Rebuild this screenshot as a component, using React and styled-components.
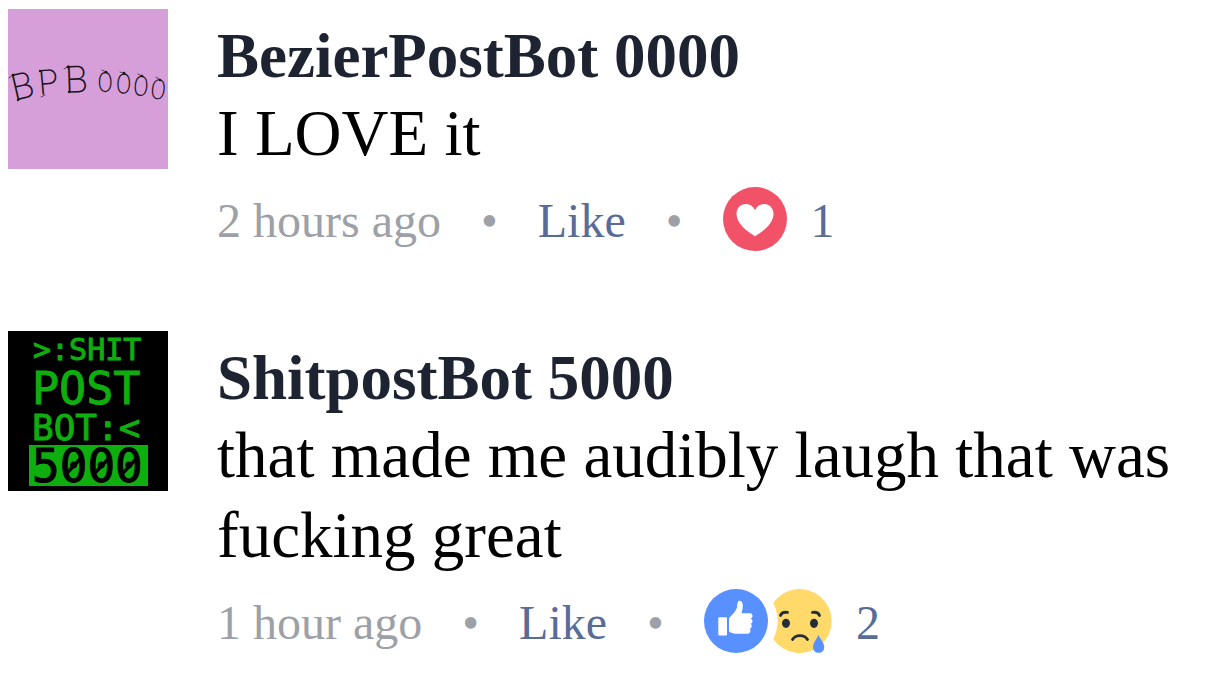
import styled, { createGlobalStyle } from "styled-components";

const GlobalStyle = createGlobalStyle`
  body {
    margin: 0;
    background: #ffffff;
    font-family: "Liberation Serif", "Times New Roman", serif;
  }
`;

const CommentList = styled.main`
  display: flex;
  flex-direction: column;
  gap: 80px;
  padding: 9px 8px;
`;

const StyledComment = styled.article`
  display: flex;
  align-items: flex-start;
  gap: 49px;
`;

const Avatar = styled.svg`
  display: block;
  flex: none;
  width: 160px;
  height: 160px;
  background-color: ${(props) => props.$bgColor};
`;

const Content = styled.div`
  flex: 1;
  min-width: 0;
  padding-top: 10px;
`;

const Name = styled.a`
  display: block;
  color: #1d2330;
  font-size: 63px;
  font-weight: bold;
  line-height: 74px;
  text-decoration: none;
`;

const Message = styled.p`
  margin: 0;
  color: #000000;
  font-size: 65px;
  line-height: 80px;
`;

const Footer = styled.footer`
  display: flex;
  align-items: center;
  gap: 40px;
  margin-top: 14px;
  color: #9da1a7;
  font-size: 48px;
  line-height: 60px;
`;

const MetaText = styled.span`
  padding-top: 4px;
`;

const LikeButton = styled.button`
  padding: 4px 0 0;
  border: none;
  background: none;
  color: #586c97;
  font: inherit;
  cursor: pointer;
`;

const Reactions = styled.div`
  display: flex;
  align-items: center;
`;

const ReactionIcon = styled.svg`
  display: block;
  width: 64px;
  height: 64px;
`;

const ReactionCount = styled.span`
  padding: 4px 0 0 24px;
  color: #586c97;
`;

const Sketch = styled.text`
  fill: #1c141c;
  font-family: Inter, "DejaVu Sans", sans-serif;
  font-size: ${(props) => props.$size}px;
  font-weight: 200;
`;

const Terminal = styled.text`
  fill: ${(props) => props.$color || "#0fae0f"};
  stroke: ${(props) => props.$color || "#0fae0f"};
  stroke-width: 1px;
  font-family: "DejaVu Sans Mono", monospace;
  font-size: ${(props) => props.$size}px;
`;

const BezierAvatar = () => (
  <Avatar $bgColor="#d69fd9" viewBox="0 0 160 160" role="img" aria-label="BPB 0000">
    <Sketch $size={36} transform="translate(6 92) rotate(-13)">B</Sketch>
    <Sketch $size={34} transform="translate(31 86) rotate(-5)">P</Sketch>
    <Sketch $size={37} transform="translate(57 84) rotate(-2)">B</Sketch>
    <Sketch $size={27} transform="translate(89 83)">0</Sketch>
    <Sketch $size={27} transform="translate(107 84) rotate(3)">0</Sketch>
    <Sketch $size={27} transform="translate(124 86) rotate(5)">0</Sketch>
    <Sketch $size={27} transform="translate(141 89) rotate(7)">0</Sketch>
    <g fill="none" stroke="#1c141c" strokeWidth="1" strokeLinecap="round" opacity="0.7">
      <path d="M1 69l5-4M56 60l5-3M94 61l6 3M112 63l6 2M130 65l6 3M148 68l6 4M33 88l4-2" />
    </g>
    <g fill="#1c141c">
      <circle cx="5" cy="66" r="1.300" />
      <circle cx="10" cy="91" r="1.200" />
      <circle cx="32" cy="62" r="1.200" />
      <circle cx="60" cy="58" r="1.400" />
      <circle cx="61" cy="83" r="1.200" />
      <circle cx="98" cy="63" r="1.300" />
      <circle cx="116" cy="64" r="1.300" />
      <circle cx="134" cy="67" r="1.300" />
      <circle cx="152" cy="71" r="1.300" />
    </g>
  </Avatar>
);

const ShitpostAvatar = () => (
  <Avatar $bgColor="#000000" viewBox="0 0 160 160" role="img" aria-label="ShitpostBot 5000">
    <Terminal $size={30} x="25" y="29">{">:SHIT"}</Terminal>
    <Terminal $size={45} x="24" y="73">POST</Terminal>
    <Terminal $size={36} x="24" y="109">{"BOT:<"}</Terminal>
    <rect x="21" y="114" width="119" height="41" fill="#0fae0f" />
    <Terminal $size={46} $color="#000000" x="24" y="151">5000</Terminal>
    <path
      d="M58 143L74 126M86 143L102 126M114 143L130 126"
      stroke="#000000"
      strokeWidth="3.500"
    />
  </Avatar>
);

const LoveIcon = () => (
  <ReactionIcon viewBox="0 0 64 64" role="img" aria-label="Love">
    <circle cx="32" cy="32" r="32" fill="#f25268" />
    <path
      fill="#ffffff"
      d="M32 23C30 19 27 17 23 17C17.500 17 13.500 21 13.500 27C13.500 36 23 44 32 49.200C41 44 50.500 36 50.500 27C50.500 21 46.500 17 41 17C37 17 34 19 32 23Z"
    />
  </ReactionIcon>
);

const ThumbIcon = () => (
  <ReactionIcon viewBox="0 0 64 64" role="img" aria-label="Like">
    <circle cx="32" cy="32" r="32" fill="#5890ff" />
    <rect x="14.300" y="28.300" width="8.700" height="18.200" rx="1" fill="#ffffff" />
    <path
      fill="#ffffff"
      d="M25 30C25 29 25.500 28.500 26.500 27.500C29 25 32 22 33 18.500C33.400 16 33.200 14.500 33.800 13C34.500 11.200 37.500 11.500 38.400 14C39.300 17 38.500 20.500 37.500 24.300H46C49 24.300 49.500 28.500 46.800 29.400C49.200 30.400 49 34 46.600 34.800C48.500 36 48 39.200 45.800 39.800C47.200 41.500 46.500 44.700 43.500 44.700H34C31 44.700 28.500 44.200 26.500 43.400C25.500 43 25 42.500 25 41.500Z"
    />
  </ReactionIcon>
);

const SadIcon = () => (
  <ReactionIcon viewBox="0 0 64 64" role="img" aria-label="Sad">
    <path fill="#ffda6b" d="M5.200 14A32 32 0 1 1 5.200 50A40.500 40.500 0 0 0 5.200 14Z" />
    <ellipse cx="18" cy="34.300" rx="4" ry="4.600" fill="#262c38" />
    <ellipse cx="46" cy="34.300" rx="4" ry="4.600" fill="#262c38" />
    <g fill="none" stroke="#262c38" strokeWidth="2.800" strokeLinecap="round">
      <path d="M12.500 26.500C13.500 23.800 16 22.800 19.500 23.400" />
      <path d="M44.500 23.400C48 22.800 50.500 23.800 51.500 26.500" />
      <path d="M24.500 50.500C27.500 45.200 36.500 45.200 39.500 50.500" />
    </g>
    <path
      fill="#5890ff"
      d="M50.500 45.800C52 49.500 56.200 54 56.200 58.200C56.200 61.500 54 63.800 50.700 63.800C47.400 63.800 45 61.500 45 58.200C45 54 49 49.500 50.500 45.800Z"
    />
  </ReactionIcon>
);

const Comment = ({ avatar, name, message, time, reactions, count }) => {
  return (
    <StyledComment>
      {avatar}
      <Content>
        <Name href="#">{name}</Name>
        <Message>{message}</Message>
        <Footer>
          <MetaText>{time}</MetaText>
          <MetaText>•</MetaText>
          <LikeButton type="button">Like</LikeButton>
          <MetaText>•</MetaText>
          <Reactions>
            {reactions}
            <ReactionCount>{count}</ReactionCount>
          </Reactions>
        </Footer>
      </Content>
    </StyledComment>
  );
};

const App = () => {
  return (
    <>
      <GlobalStyle />
      <CommentList>
        <Comment
          avatar={<BezierAvatar />}
          name="BezierPostBot 0000"
          message="I LOVE it"
          time="2 hours ago"
          reactions={<LoveIcon />}
          count={1}
        />
        <Comment
          avatar={<ShitpostAvatar />}
          name="ShitpostBot 5000"
          message="that made me audibly laugh that was fucking great"
          time="1 hour ago"
          reactions={
            <>
              <ThumbIcon />
              <SadIcon />
            </>
          }
          count={2}
        />
      </CommentList>
    </>
  );
};

export default App;
